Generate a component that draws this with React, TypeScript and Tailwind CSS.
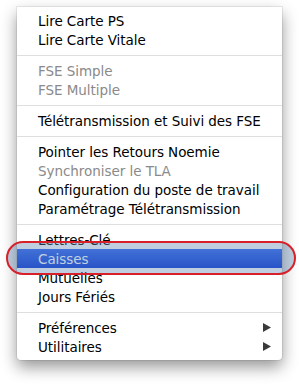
import React from "react"

type Item = { label: string; disabled?: boolean; submenu?: boolean; selected?: boolean }

const groups: Item[][] = [
  [{ label: "Lire Carte PS" }, { label: "Lire Carte Vitale" }],
  [
    { label: "FSE Simple", disabled: true },
    { label: "FSE Multiple", disabled: true },
  ],
  [{ label: "Télétransmission et Suivi des FSE" }],
  [
    { label: "Pointer les Retours Noemie" },
    { label: "Synchroniser le TLA", disabled: true },
    { label: "Configuration du poste de travail" },
    { label: "Paramétrage Télétransmission" },
  ],
  [
    { label: "Lettres-Clé" },
    { label: "Caisses", selected: true },
    { label: "Mutuelles" },
    { label: "Jours Fériés" },
  ],
  [
    { label: "Préférences", submenu: true },
    { label: "Utilitaires", submenu: true },
  ],
]

function MenuRow({ item }: { item: Item }) {
  return (
    <div
      className={
        item.selected
          ? "flex items-center h-[19px] pl-[21px] pr-[11px] bg-gradient-to-b from-[#2f62f2] to-[#0630d8] text-white"
          : item.disabled
            ? "flex items-center h-[19px] pl-[21px] pr-[11px] text-[#8a8a8a]"
            : "flex items-center h-[19px] pl-[21px] pr-[11px] text-black"
      }
    >
      <span className="flex-1 pt-[2px] whitespace-nowrap">{item.label}</span>
      {item.submenu && (
        <svg width="8" height="9" viewBox="0 0 8 9">
          <path d="M0 0 L8 4.5 L0 9 Z" fill="#3a3a3a" />
        </svg>
      )}
    </div>
  )
}

export default function App() {
  return (
    <div className="relative w-[299px] h-[387px] bg-white overflow-hidden font-['DejaVu_Sans',sans-serif] text-[13.5px] leading-[19px] tracking-[-0.05px]">
      <div className="ml-[17px] mt-[7px] w-[265px] py-[4px] bg-white rounded-b-[4px] shadow-[0_0_0_1px_rgba(0,0,0,0.07),0_7px_16px_rgba(0,0,0,0.42)]">
        {groups.map((group, gi) => (
          <div key={gi}>
            {gi > 0 && (
              <div className="h-[12px] flex items-center">
                <div className="w-full h-px bg-[#dedede]" />
              </div>
            )}
            {group.map(item => (
              <MenuRow key={item.label} item={item} />
            ))}
          </div>
        ))}
      </div>

      {/* annotation marking the selected row */}
      <div className="absolute left-[6px] top-[241px] w-[290px] h-[34px] rounded-[17px] border-2 border-[#d8202a] bg-[rgba(95,135,175,0.4)]" />
    </div>
  )
}
